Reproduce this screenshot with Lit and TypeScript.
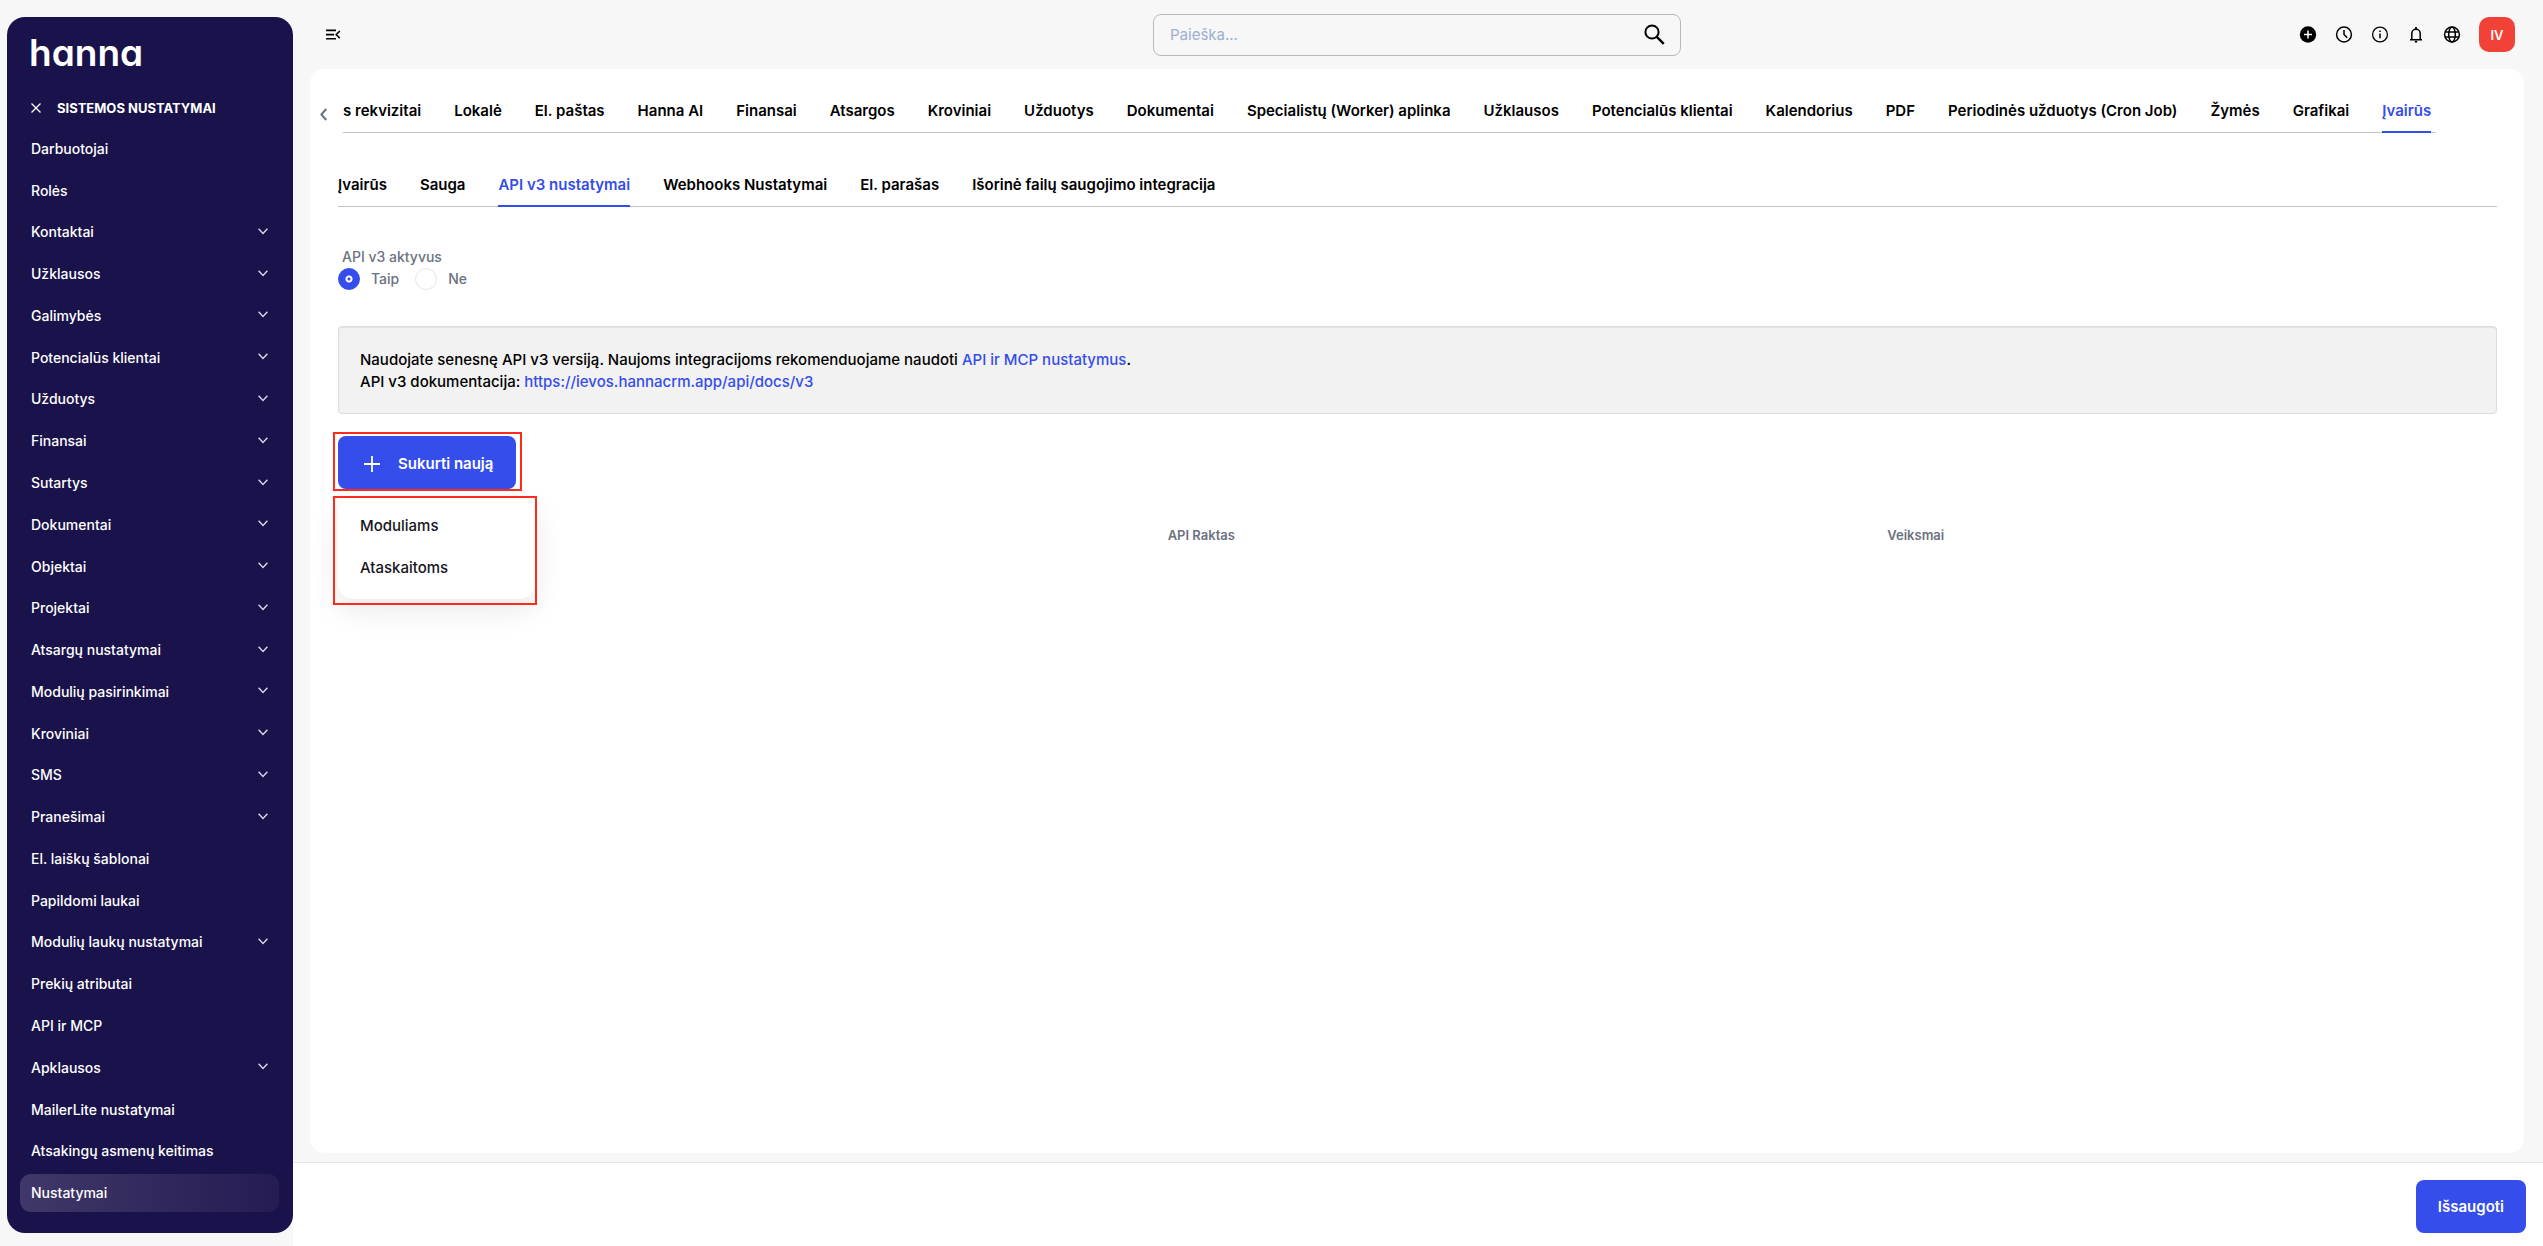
import { LitElement, html, css, svg, nothing } from "lit";
import { customElement, state } from "lit/decorators.js";
import { classMap } from "lit/directives/class-map.js";

interface NavItem {
  label: string;
  group?: boolean;
}

const NAV: NavItem[] = [
  { label: "Darbuotojai" },
  { label: "Rolės" },
  { label: "Kontaktai", group: true },
  { label: "Užklausos", group: true },
  { label: "Galimybės", group: true },
  { label: "Potencialūs klientai", group: true },
  { label: "Užduotys", group: true },
  { label: "Finansai", group: true },
  { label: "Sutartys", group: true },
  { label: "Dokumentai", group: true },
  { label: "Objektai", group: true },
  { label: "Projektai", group: true },
  { label: "Atsargų nustatymai", group: true },
  { label: "Modulių pasirinkimai", group: true },
  { label: "Kroviniai", group: true },
  { label: "SMS", group: true },
  { label: "Pranešimai", group: true },
  { label: "El. laiškų šablonai" },
  { label: "Papildomi laukai" },
  { label: "Modulių laukų nustatymai", group: true },
  { label: "Prekių atributai" },
  { label: "API ir MCP" },
  { label: "Apklausos", group: true },
  { label: "MailerLite nustatymai" },
  { label: "Atsakingų asmenų keitimas" },
  { label: "Nustatymai" },
];

const SECTIONS = [
  "s rekvizitai", "Lokalė", "El. paštas", "Hanna AI", "Finansai", "Atsargos",
  "Kroviniai", "Užduotys", "Dokumentai", "Specialistų (Worker) aplinka",
  "Užklausos", "Potencialūs klientai", "Kalendorius", "PDF",
  "Periodinės užduotys (Cron Job)", "Žymės", "Grafikai", "Įvairūs",
];

const SUBSECTIONS = [
  "Įvairūs", "Sauga", "API v3 nustatymai", "Webhooks Nustatymai",
  "El. parašas", "Išorinė failų saugojimo integracija",
];

const FONT = css`Inter, "Liberation Sans", sans-serif`;

@customElement("side-nav")
export class SideNav extends LitElement {
  @state() private current = "Nustatymai";

  static styles = css`
    :host {
      display: flex;
      flex-direction: column;
      box-sizing: border-box;
      padding: 17px 14px 19px 13px;
      border-radius: 18px;
      background: #19124b;
      color: #fff;
      font-family: ${FONT};
    }
    .logo {
      padding-left: 9px;
      font-size: 37px;
      line-height: 38px;
      font-weight: 600;
      font-feature-settings: "cv11";
      color: #fff;
      text-decoration: none;
    }
    .head {
      display: flex;
      align-items: center;
      gap: 16px;
      padding: 26px 11px 10px;
    }
    .close {
      display: flex;
      padding: 0;
      border: 0;
      background: none;
      color: inherit;
    }
    .title {
      margin: 0;
      font-size: 13px;
      line-height: 20px;
      font-weight: 700;
      text-transform: uppercase;
    }
    .list {
      flex: 1;
      display: grid;
      grid-auto-rows: 1fr;
      margin: 0;
      padding: 0;
      list-style: none;
    }
    .row {
      display: flex;
      padding: 2px 0;
    }
    .link {
      flex: 1;
      display: flex;
      align-items: center;
      justify-content: space-between;
      padding: 0 11px;
      border-radius: 11px;
      font-size: 14px;
      line-height: 20px;
      font-weight: 500;
      color: #fff;
      text-decoration: none;
    }
    .active {
      background: linear-gradient(90deg, #3f3868, #241c53);
    }
  `;

  render() {
    return html`
      <a class="logo" href="#">hanna</a>
      <div class="head">
        <button class="close" aria-label="Uždaryti">
          <svg width="10" height="10" viewBox="0 0 10 10" fill="none" stroke="currentColor" stroke-width="1.3">
            <path d="M.5.5l9 9M9.5.5l-9 9" />
          </svg>
        </button>
        <h2 class="title">Sistemos nustatymai</h2>
      </div>
      <ul class="list">
        ${NAV.map(
          (n) => html`<li class="row">
            <a
              class=${classMap({ link: true, active: n.label === this.current })}
              href="#"
              @click=${() => (this.current = n.label)}
              >${n.label}${n.group
                ? html`<svg width="10" height="9" viewBox="0 0 10 9" fill="none" stroke="#dcdae6" stroke-width="1.4">
                    <path d="M.6.8L5 5.4 9.4.8" />
                  </svg>`
                : nothing}</a
            >
          </li>`
        )}
      </ul>
    `;
  }
}

@customElement("top-bar")
export class TopBar extends LitElement {
  static styles = css`
    :host {
      display: grid;
      grid-template-columns: 1fr 528px 1fr;
      align-items: center;
      box-sizing: border-box;
      height: 69px;
      padding: 0 9px;
      font-family: ${FONT};
    }
    .icon {
      display: flex;
      padding: 0;
      border: 0;
      background: none;
      color: #000;
    }
    .toggle {
      padding-left: 7px;
    }
    .search {
      display: flex;
      align-items: center;
      box-sizing: border-box;
      height: 42px;
      padding: 0 15px 0 16px;
      border: 1px solid #b9b9b9;
      border-radius: 8px;
    }
    .field {
      flex: 1;
      min-width: 0;
      padding: 0;
      border: 0;
      outline: 0;
      background: none;
      font: 400 15px/20px ${FONT};
      color: #000;
    }
    .field::placeholder {
      color: #9bb0d0;
      opacity: 1;
    }
    .actions {
      display: flex;
      align-items: center;
      justify-content: flex-end;
      gap: 18px;
    }
    .avatar {
      width: 36px;
      height: 35px;
      padding: 0;
      border: 0;
      border-radius: 10px;
      background: #f24238;
      color: #fff;
      font: 600 13px/16px ${FONT};
    }
  `;

  render() {
    const icon = (label: string, body: unknown) => html`<button class="icon" aria-label=${label}>
      <svg width="18" height="18" viewBox="0 0 18 18" fill="none" stroke="currentColor" stroke-width="1.5">${body}</svg>
    </button>`;
    return html`
      <button class="icon toggle" aria-label="Meniu">
        <svg width="15" height="12" viewBox="0 0 15 12" fill="none" stroke="currentColor" stroke-width="1.6">
          <path d="M0 1.4h10M0 5.6h8M0 9.8h10M13.8 2L10.2 5.6l3.6 3.6" />
        </svg>
      </button>
      <div class="search">
        <input class="field" type="search" aria-label="Paieška" placeholder="Paieška..." />
        <button class="icon" aria-label="Ieškoti">
          <svg width="21" height="21" viewBox="0 0 21 21" fill="none" stroke="currentColor" stroke-width="2">
            <circle cx="8" cy="8" r="6.6" />
            <path d="M12.8 12.8l7 7" stroke-width="2.4" />
          </svg>
        </button>
      </div>
      <div class="actions">
        ${icon("Pridėti", svg`<circle cx="9" cy="8.5" r="8.2" fill="currentColor" stroke="none" /><path d="M9 4.5v8M5 8.5h8" stroke="#fff" />`)}
        ${icon("Istorija", svg`<circle cx="9" cy="8.5" r="7.4" /><path d="M9 4.1v4.4l3.2 3.2" />`)}
        ${icon("Informacija", svg`<circle cx="9" cy="8.5" r="7.4" stroke-width="1.3" /><path d="M9 7.5v4.8M9 4.5v1.6" />`)}
        ${icon("Pranešimai", svg`<path d="M3 13.7h12M4.8 13.5V7.5a4.2 4.2 0 0 1 8.4 0v6" /><path d="M9 1.1v2M7.8 15.7h2.4" stroke-width="1.8" />`)}
        ${icon("Kalba", svg`<circle cx="9" cy="8.5" r="7.4" /><ellipse cx="9" cy="8.5" rx="3.3" ry="7.4" /><path d="M2.2 6.1h13.6M2.2 10.9h13.6" />`)}
        <button class="avatar">IV</button>
      </div>
    `;
  }
}

@customElement("api-settings")
export class ApiSettings extends LitElement {
  @state() private section = "Įvairūs";
  @state() private subsection = "API v3 nustatymai";

  static styles = css`
    :host {
      display: block;
      box-sizing: border-box;
      padding: 22px 27px 22px 28px;
      border-radius: 15px;
      background: #fff;
      font-family: ${FONT};
      color: #000;
    }
    .scroller {
      display: flex;
      align-items: center;
      gap: 16px;
      margin: 0 61px 0 -18px;
    }
    .prev {
      display: flex;
      padding: 5px 0 0;
      border: 0;
      background: none;
      color: #6b7280;
    }
    .tabs {
      flex: 1;
      display: flex;
      gap: 33px;
      overflow: hidden;
      white-space: nowrap;
      box-shadow: inset 0 -1px #c4c4c8;
    }
    .tab {
      padding: 10px 0;
      border: 0;
      border-bottom: 2px solid transparent;
      background: none;
      font: 600 15px/20px ${FONT};
      color: inherit;
    }
    .selected {
      border-color: #354deb;
      color: #354deb;
    }
    .sub {
      margin-top: 32px;
    }
    .choice {
      margin: 39px 0 0;
      padding: 0;
      border: 0;
      font-size: 14px;
      line-height: 22px;
      font-weight: 500;
      color: #6b7280;
    }
    .legend {
      padding: 0 0 0 4px;
    }
    .options {
      display: flex;
      gap: 16px;
    }
    .option {
      display: flex;
      align-items: center;
      gap: 11px;
    }
    .radio {
      appearance: none;
      box-sizing: border-box;
      width: 22px;
      height: 22px;
      margin: 0;
      border: 1px solid #dfe7e7;
      border-radius: 50%;
      background: #fff;
    }
    .radio:checked {
      border-color: #354deb;
      background: radial-gradient(circle, #354deb 1px, #fff 2px, #fff 3px, #354deb 4px);
    }
    .notice {
      margin: 36px 0 0;
      padding: 22px 21px 20px;
      border: 1px solid #dcdcde;
      border-radius: 4px;
      background: #f2f2f2;
      box-shadow: inset 0 1px 1px #e2e2e4;
      font-size: 15px;
      line-height: 22px;
      font-weight: 500;
    }
    .notice a {
      color: #354deb;
      text-decoration: none;
    }
    .create {
      position: relative;
      width: max-content;
      margin-top: 22px;
    }
    .add {
      display: flex;
      align-items: center;
      gap: 17px;
      height: 53px;
      padding: 2px 23px 0 25px;
      border: 0;
      border-radius: 8px;
      background: #354deb;
      color: #fff;
      font: 600 15px/20px ${FONT};
    }
    .menu {
      position: absolute;
      top: 62px;
      left: 0;
      box-sizing: border-box;
      width: 197px;
      margin: 0;
      padding: 7px 0 10px;
      list-style: none;
      border-radius: 15px;
      background: #fff;
      box-shadow: 0 10px 30px rgba(30, 30, 60, 0.1);
    }
    .item {
      display: block;
      box-sizing: border-box;
      width: 100%;
      padding: 11px 22px;
      border: 0;
      background: none;
      text-align: left;
      font: 500 15px/20px ${FONT};
      color: #16161c;
    }
    .mark {
      position: absolute;
      box-sizing: border-box;
      border: 2px solid #fb2c1c;
      pointer-events: none;
    }
    .mark-button {
      inset: -4px -6px -2px -5px;
    }
    .mark-menu {
      top: 60px;
      left: -5px;
      width: 204px;
      height: 109px;
    }
    .keys {
      width: 100%;
      margin-top: 34px;
      border-collapse: collapse;
      table-layout: fixed;
    }
    .keys th {
      padding: 2px 0 2px 110px;
      text-align: left;
      font-size: 13px;
      line-height: 20px;
      font-weight: 600;
      color: #6b7280;
    }
  `;

  private tab(label: string, current: string, pick: () => void) {
    const on = label === current;
    return html`<button class=${classMap({ tab: true, selected: on })} role="tab" aria-selected=${on} @click=${pick}>${label}</button>`;
  }

  render() {
    return html`
      <div class="scroller">
        <button class="prev" aria-label="Atgal">
          <svg width="7" height="13" viewBox="0 0 7 13" fill="none" stroke="currentColor" stroke-width="2">
            <path d="M6.2 1L1.4 6.5l4.8 5.5" />
          </svg>
        </button>
        <div class="tabs" role="tablist">
          ${SECTIONS.map((s) => this.tab(s, this.section, () => (this.section = s)))}
        </div>
      </div>
      <div class="tabs sub" role="tablist">
        ${SUBSECTIONS.map((s) => this.tab(s, this.subsection, () => (this.subsection = s)))}
      </div>
      <fieldset class="choice">
        <legend class="legend">API v3 aktyvus</legend>
        <div class="options">
          <label class="option"><input class="radio" type="radio" name="active" checked />Taip</label>
          <label class="option"><input class="radio" type="radio" name="active" />Ne</label>
        </div>
      </fieldset>
      <p class="notice">
        Naudojate senesnę API v3 versiją. Naujoms integracijoms rekomenduojame naudoti
        <a href="#">API ir MCP nustatymus</a>.<br />
        API v3 dokumentacija: <a href="#">https://ievos.hannacrm.app/api/docs/v3</a>
      </p>
      <div class="create">
        <button class="add" aria-haspopup="menu" aria-expanded="true">
          <svg width="18" height="18" viewBox="0 0 18 18" fill="none" stroke="currentColor" stroke-width="1.8">
            <path d="M9 1v16M1 9h16" />
          </svg>
          Sukurti naują
        </button>
        <ul class="menu" role="menu">
          <li role="none"><button class="item" role="menuitem">Moduliams</button></li>
          <li role="none"><button class="item" role="menuitem">Ataskaitoms</button></li>
        </ul>
        <div class="mark mark-button"></div>
        <div class="mark mark-menu"></div>
      </div>
      <table class="keys">
        <thead>
          <tr>
            <th></th>
            <th scope="col">API Raktas</th>
            <th scope="col">Veiksmai</th>
          </tr>
        </thead>
      </table>
    `;
  }
}

@customElement("app-root")
export class AppRoot extends LitElement {
  static styles = css`
    :host {
      display: flex;
      min-height: 100vh;
      background: #f7f7f7;
      font-family: ${FONT};
    }
    .side {
      width: 286px;
      flex: none;
      margin: 17px 0 13px 7px;
    }
    .page {
      flex: 1;
      min-width: 0;
      display: flex;
      flex-direction: column;
    }
    .bar {
      margin: 0 19px 0 17px;
    }
    .content {
      flex: 1;
      margin: 0 19px 9px 17px;
    }
    .footer {
      display: flex;
      justify-content: flex-end;
      padding: 17px 17px 13px;
      border-top: 1px solid #e6e6e8;
      background: #fff;
    }
    .save {
      height: 53px;
      padding: 0 22px;
      border: 0;
      border-radius: 8px;
      background: #354deb;
      color: #fff;
      font: 600 15px/20px ${FONT};
    }
  `;

  render() {
    return html`
      <side-nav class="side"></side-nav>
      <div class="page">
        <top-bar class="bar"></top-bar>
        <api-settings class="content"></api-settings>
        <footer class="footer"><button class="save">Išsaugoti</button></footer>
      </div>
    `;
  }
}
